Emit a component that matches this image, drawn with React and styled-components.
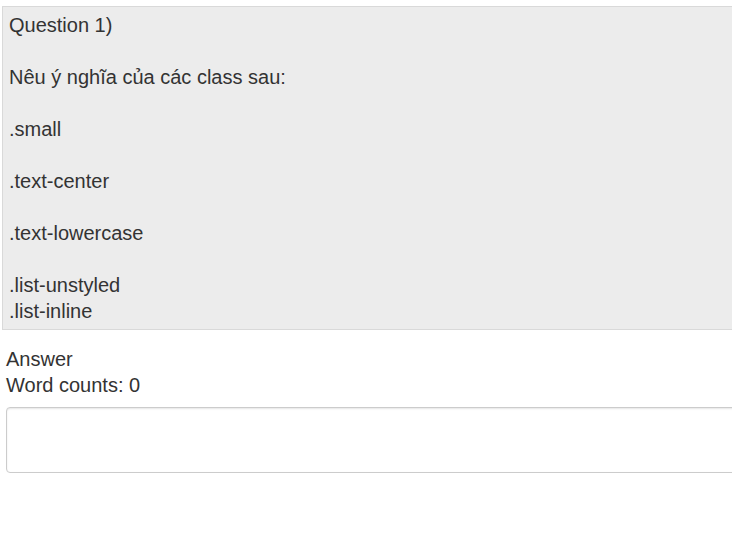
import React from "react";
import styled, { createGlobalStyle } from "styled-components";

const GlobalStyle = createGlobalStyle`
  html, body {
    margin: 0;
    padding: 0;
    overflow: hidden;
    background: #fff;
  }
  body {
    font-family: "Liberation Sans", Arial, sans-serif;
    color: #333;
  }
`;

const Page = styled.div`
  width: 800px;
  padding: 6px 0 0 2px;
`;

const QuestionBox = styled.pre`
  margin: 0;
  padding: 5px 6px 5px;
  background: #ececec;
  border: 1px solid #d9d9d9;
  font-family: "Liberation Sans", Arial, sans-serif;
  font-size: 20px;
  line-height: 26px;
  color: #333;
  white-space: pre-wrap;
`;

const AnswerBlock = styled.div`
  padding: 16px 0 0 4px;
  font-size: 20px;
  line-height: 26px;
`;

const Label = styled.div``;

const AnswerInput = styled.textarea`
  display: block;
  box-sizing: border-box;
  width: 820px;
  height: 66px;
  margin-top: 9px;
  border: 1px solid #ccc;
  border-radius: 4px;
  box-shadow: inset 0 1px 2px rgba(0, 0, 0, 0.1);
  background: #fff;
  resize: none;
  font-family: inherit;
  font-size: 16px;
  outline: none;
`;

const questionText = `Question 1)

Nêu ý nghĩa của các class sau:

.small

.text-center

.text-lowercase

.list-unstyled
.list-inline`;

export default function App() {
  return (
    <Page>
      <GlobalStyle />
      <QuestionBox>{questionText}</QuestionBox>
      <AnswerBlock>
        <Label>Answer</Label>
        <Label>Word counts: 0</Label>
        <AnswerInput />
      </AnswerBlock>
    </Page>
  );
}
